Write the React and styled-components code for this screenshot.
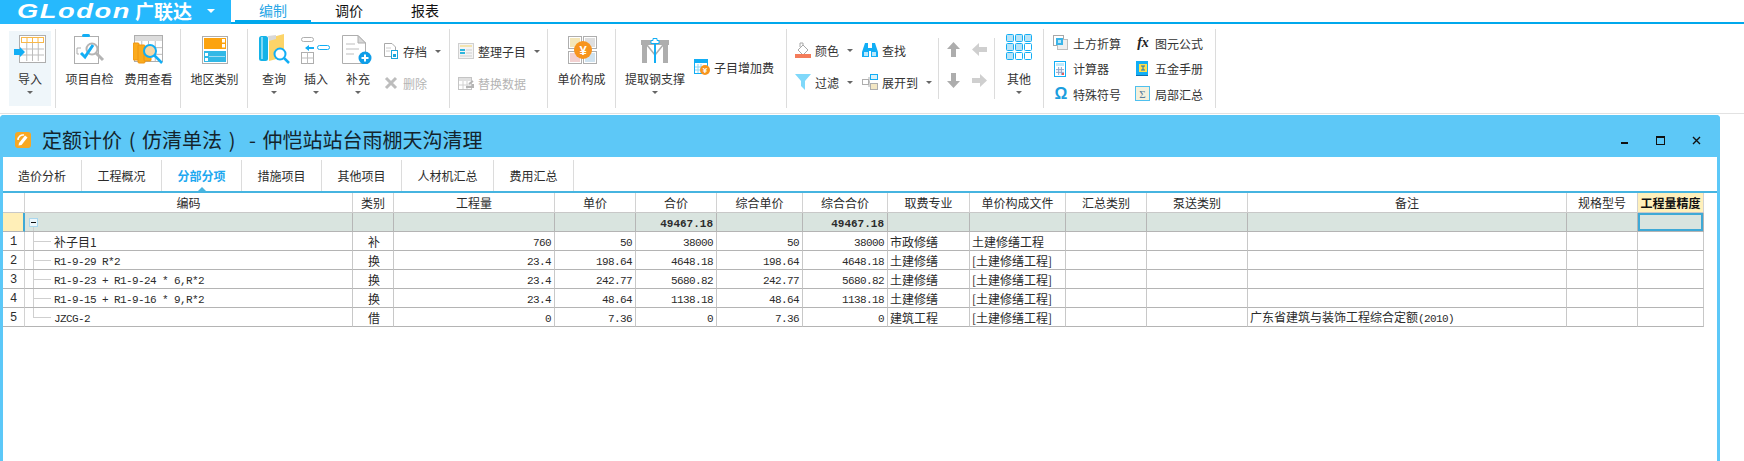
import styled, { createGlobalStyle } from 'styled-components'

const GlobalStyle = createGlobalStyle`
  html, body { margin: 0; padding: 0; background: #fff; }
  body { font-family: "Noto Sans CJK SC", "Liberation Sans", sans-serif; font-size: 12px; color: #2b2b2b; }
`

const Page = styled.div`
  width: 1744px;
  height: 461px;
  overflow: hidden;
  display: flex;
  flex-direction: column;
`

const TopBar = styled.div`
  height: 22px;
  border-bottom: 2px solid #00a8ec;
  display: flex;
`

const Logo = styled.div`
  width: 231px;
  height: 24px;
  background: #26b9fd;
  color: #fff;
  display: flex;
  align-items: flex-start;
  padding-left: 17px;
  box-sizing: border-box;
`

const LogoWord = styled.span`
  font-family: "Liberation Sans", sans-serif;
  font-style: italic;
  font-weight: 700;
  font-size: 21px;
  letter-spacing: 1.2px;
  line-height: 22px;
  width: 118px;
  transform: scaleX(1.3);
  transform-origin: left center;
`

const LogoCn = styled.span`
  font-size: 19px;
  font-weight: 700;
  line-height: 22px;
  width: 72px;
`

const LogoCaret = styled.span`
  width: 0;
  height: 0;
  margin-top: 9px;
  border: 4px solid transparent;
  border-top: 4px solid #fff;
  border-bottom: 0;
`

const MenuTabs = styled.div`
  display: flex;
  margin-left: 4px;
`

const MenuTab = styled.div`
  width: 76px;
  height: 22px;
  box-sizing: border-box;
  text-align: center;
  font-size: 14px;
  line-height: 20px;
  color: ${(p) => (p.$active ? '#2aa6e6' : '#111')};
  background: #fff;
  border-bottom: 2px solid ${(p) => (p.$active ? '#00a8ec' : '#fff')};
`

const Ribbon = styled.div`
  height: 90px;
  box-sizing: border-box;
  border-bottom: 1px solid #e2e2e2;
  display: flex;
  align-items: flex-start;
`

const Group = styled.div`
  width: ${(p) => p.$w}px;
  height: 79px;
  margin-top: 5px;
  box-sizing: border-box;
  border-right: 1px solid #dcdcdc;
  padding-left: ${(p) => p.$pad || 0}px;
  display: flex;
  align-items: flex-start;
  flex: none;
`

const LargeButton = styled.div`
  width: ${(p) => p.$w}px;
  height: ${(p) => (p.$active ? 75 : 79)}px;
  margin-top: ${(p) => (p.$active ? 2 : 0)}px;
  padding-top: ${(p) => (p.$active ? 3 : 5)}px;
  box-sizing: border-box;
  background: ${(p) => (p.$active ? '#eff6fa' : 'transparent')};
  display: flex;
  flex-direction: column;
  align-items: center;
  flex: none;
`

const Label = styled.div`
  line-height: 16px;
  margin-top: ${(p) => p.$top || 7}px;
  white-space: nowrap;
  color: #333;
`

const Caret = styled.span`
  display: block;
  width: 0;
  height: 0;
  flex: none;
  border: 3px solid transparent;
  border-top: 3px solid #666;
  border-bottom: 0;
  margin: ${(p) => p.$m || '4px 0 0'};
`

const Stack = styled.div`
  display: flex;
  flex-direction: column;
  gap: 12px;
  padding-top: 12px;
  margin-left: ${(p) => p.$left || 0}px;
  flex: none;
`

const SmallRow = styled.div`
  display: flex;
  align-items: center;
  height: 20px;
  white-space: nowrap;
  color: ${(p) => (p.$off ? '#b4b4b4' : '#333')};
`

const SoloRow = styled(SmallRow)`
  margin: 28px 0 0 4px;
  flex: none;
`

const SmallIconBox = styled.span`
  width: 16px;
  height: 16px;
  margin-right: 4px;
  display: flex;
  align-items: center;
  justify-content: center;
  flex: none;
`

const ColourGrid = styled.div`
  display: grid;
  grid-template-columns: 67px 76px;
  grid-auto-rows: 20px;
  row-gap: 12px;
  padding-top: 11px;
  margin-left: 8px;
  flex: none;
`

const ShortRule = styled.div`
  width: 1px;
  height: 61px;
  margin-top: 9px;
  background: #dcdcdc;
  flex: none;
`

const ArrowGrid = styled.div`
  width: 55px;
  display: grid;
  grid-template-columns: 15px 15px;
  column-gap: 11px;
  row-gap: 16px;
  padding: 13px 0 0 7px;
  box-sizing: border-box;
  flex: none;
`

const ToolGrid = styled.div`
  display: grid;
  grid-template-columns: 82px 76px;
  grid-auto-rows: 20px;
  row-gap: 5.5px;
  padding-top: 4px;
  margin-left: 9px;
  flex: none;
`

const Window = styled.div`
  margin-top: 1px;
  width: 1720px;
  flex: 1;
  box-sizing: border-box;
  background: #fff;
  border: 3px solid #5cc8f8;
  border-width: 0 3px;
  border-radius: 4px 4px 0 0;
  display: flex;
  flex-direction: column;
`

const TitleBar = styled.div`
  height: 42px;
  margin: 0 -3px;
  padding: 8px 20px 0 15px;
  box-sizing: border-box;
  background: #5dc8f7;
  border-radius: 4px 4px 0 0;
  display: flex;
  align-items: center;
`

const TitleText = styled.div`
  font-size: 20px;
  line-height: 26px;
  margin-left: 11px;
  color: #14242c;
  white-space: pre;
  word-spacing: 2.2px;
  flex: 1;
`

const WinControls = styled.div`
  display: flex;
  align-items: center;
  margin-right: -1px;
`

const WinButton = styled.span`
  width: 9px;
  height: 9px;
  margin-left: ${(p) => p.$ml}px;
  display: block;
  flex: none;
`

const SheetTabs = styled.div`
  height: 36px;
  box-sizing: border-box;
  padding-top: 3px;
  border-bottom: 2px solid #46b4e0;
  display: flex;
`

const SheetTab = styled.div`
  width: ${(p) => p.$w}px;
  box-sizing: border-box;
  position: relative;
  border-right: 1px solid #dcdcdc;
  text-align: center;
  line-height: 31px;
  font-weight: ${(p) => (p.$active ? 700 : 400)};
  color: ${(p) => (p.$active ? '#1ea8f0' : '#2b2b2b')};
  ${(p) =>
    p.$active &&
    `&::after {
      content: '';
      position: absolute;
      left: 36px;
      bottom: 0;
      border: 4px solid transparent;
      border-bottom: 4px solid #46b4e0;
      border-top: 0;
    }`}
`

const Sheet = styled.table`
  width: 1701px;
  table-layout: fixed;
  border-collapse: separate;
  border-spacing: 0;
`

const HeadCell = styled.th`
  height: 20px;
  padding: 0;
  box-sizing: border-box;
  line-height: 16px;
  font-weight: ${(p) => (p.$hot ? 700 : 400)};
  color: ${(p) => (p.$hot ? '#111' : '#2b2b2b')};
  background: ${(p) => (p.$hot ? '#fff0bb' : '#fff')};
  border-right: 1px solid #d2d2d2;
  border-bottom: 1px solid #c8c8c8;
  text-align: center;
  white-space: nowrap;
  overflow: hidden;
`

const Cell = styled.td`
  height: 19px;
  padding: ${(p) => (p.$right ? '2px 3px 0 0' : '2px 0 0 2px')};
  box-sizing: border-box;
  line-height: 14px;
  background: ${(p) => (p.$total ? '#d9e4df' : '#fff')};
  border-right: 1px solid ${(p) => (p.$total ? '#b6b6b6' : '#c8c8c8')};
  border-bottom: 1px solid #b4b4b4;
  text-align: ${(p) => (p.$right ? 'right' : p.$center ? 'center' : 'left')};
  white-space: nowrap;
  overflow: hidden;
  ${(p) => p.$picked && 'box-shadow: inset 0 0 0 2px #3fa9d6;'}
`

const RowNumber = styled.td`
  height: 19px;
  padding: 2px 0 0;
  box-sizing: border-box;
  line-height: 14px;
  text-align: center;
  background: ${(p) => (p.$total ? '#ffefb8' : '#fff')};
  border-right: ${(p) => (p.$total ? '2px solid #3fa9d6' : '1px solid #d2d2d2')};
  border-bottom: 1px solid #b4b4b4;
  font-family: "Liberation Mono", monospace;
`

const TreeCell = styled(Cell)`
  position: relative;
  padding-left: 29px;
  &::before {
    content: '';
    position: absolute;
    left: 8px;
    top: 0;
    width: 1px;
    height: ${(p) => (p.$last ? '10px' : '100%')};
    background: #cfcfcf;
  }
  &::after {
    content: '';
    position: absolute;
    left: 8px;
    top: 9px;
    width: 18px;
    height: 1px;
    background: #cfcfcf;
  }
`

const RootCell = styled(Cell)`
  position: relative;
  padding-top: 0;
  &::after {
    content: '';
    position: absolute;
    left: 8px;
    top: 14px;
    width: 1px;
    height: 5px;
    background: #cfcfcf;
  }
`

const Fold = styled.span`
  display: flex;
  width: 9px;
  height: 9px;
  margin-left: 2px;
  box-sizing: border-box;
  border: 1px solid #a9d7ee;
  background: #eef7fc;
  align-items: center;
  justify-content: center;
  &::before {
    content: '';
    width: 5px;
    height: 1px;
    background: #111;
  }
`

const Mono = styled.span`
  font-family: "Liberation Mono", monospace;
  font-size: 11px;
  letter-spacing: ${(p) => (p.$bold ? 0 : '-0.6px')};
  font-weight: ${(p) => (p.$bold ? 700 : 400)};
`

const SvgBox = styled.svg`
  display: block;
  flex: none;
`

const Svg = ({ w = 32, h = 30, children }) => (
  <SvgBox width={w} height={h} viewBox={`0 0 ${w} ${h}`}>
    {children}
  </SvgBox>
)

const BLUE = '#12aef5'
const GREY = '#aeaeae'

function GridLines({ x, y, w, h, cols, rows, color = '#bdbdbd' }) {
  const lines = []
  for (let i = 1; i < cols; i++) {
    const px = x + (w * i) / cols
    lines.push(<line key={'c' + i} x1={px} x2={px} y1={y} y2={y + h} stroke={color} />)
  }
  for (let i = 1; i < rows; i++) {
    const py = y + (h * i) / rows
    lines.push(<line key={'r' + i} y1={py} y2={py} x1={x} x2={x + w} stroke={color} />)
  }
  return <>{lines}</>
}

const ImportIcon = () => (
  <Svg>
    <rect x="5.5" y="1.5" width="26" height="27" fill="#fff" stroke={GREY} />
    <GridLines x={7} y={9} w={23} h={18} cols={4} rows={3} />
    <rect x="7.5" y="3.5" width="22" height="5" fill="#fff" stroke="#f8b84a" />
    <GridLines x={7.5} y={3.5} w={22} h={5} cols={4} rows={1} color="#f8b84a" />
    <polygon points="0,15 6,15 6,13 11,18 6,23 6,21 0,21" fill={BLUE} />
  </Svg>
)

const CheckIcon = () => (
  <Svg>
    <rect x="0.5" y="2.5" width="24" height="27" fill="#fff" stroke={GREY} />
    <rect x="8" y="0" width="8" height="3" rx="1.5" fill={BLUE} />
    <path d="M3 14h4M3 14v6h2" fill="none" stroke={GREY} />
    <circle cx="18" cy="15" r="5.5" fill="#fff" stroke="#b4b4b4" strokeWidth="2" />
    <line x1="22" y1="19" x2="29" y2="26" stroke="#b4b4b4" strokeWidth="3" />
    <polyline points="7,19 11,23 19,11" fill="none" stroke={BLUE} strokeWidth="3" />
  </Svg>
)

const CostIcon = () => (
  <Svg>
    <rect x="1.5" y="1.5" width="28" height="26" fill="#fff" stroke={GREY} />
    <rect x="2" y="2" width="27" height="5" fill="#dcdcdc" />
    <GridLines x={2} y={7} w={27} h={20} cols={4} rows={3} />
    <rect x="0" y="9" width="6" height="17" rx="1" fill="#fbab1d" stroke="#ee9510" />
    <rect x="5" y="11" width="7" height="18" rx="1" fill="#fbab1d" stroke="#ee9510" />
    <rect x="11" y="13" width="7" height="14" rx="1" fill="#fbab1d" stroke="#ee9510" />
    <circle cx="17" cy="17" r="6" fill="#f6d8a8" stroke={BLUE} strokeWidth="2" />
    <line x1="21" y1="21" x2="29" y2="29" stroke={BLUE} strokeWidth="2.5" />
  </Svg>
)

const AreaIcon = () => (
  <Svg>
    <rect x="3.5" y="2.5" width="25" height="27" fill="#fff" stroke={GREY} />
    <rect x="5" y="4" width="22" height="11" fill="#fca30f" />
    <rect x="23" y="5" width="3" height="3.5" fill="#fff" />
    <rect x="23" y="10" width="3" height="3.5" fill="#fff" />
    <rect x="5" y="17" width="22" height="11" fill="#31b8e6" />
    <rect x="6" y="19" width="3" height="3" fill="#fff" />
    <rect x="6" y="24" width="3" height="3" fill="#fff" />
    <line x1="10" x2="26" y1="22.5" y2="22.5" stroke="#9fdcf2" />
  </Svg>
)

const BookIcon = () => (
  <Svg>
    <path d="M11 4 L26 0 V23 L11 27 Z" fill="#fcd468" />
    <path d="M10 2 L18 1 V5 L11 7 Z" fill="#d8d8d8" />
    <rect x="1" y="2" width="9" height="25" rx="2.5" fill="#14b3e8" />
    <rect x="3" y="3" width="2" height="22" fill="#7fd8f4" />
    <circle cx="22" cy="20" r="5.5" fill="#fff" stroke={BLUE} strokeWidth="2" />
    <line x1="26" y1="24" x2="31" y2="29" stroke={BLUE} strokeWidth="2.5" />
  </Svg>
)

const InsertIcon = () => (
  <Svg>
    <rect x="1.5" y="3.5" width="12" height="4" rx="2" fill="#fff" stroke={GREY} />
    <polygon points="5,14 9,11 9,13 14,13 14,15 9,15 9,17" fill={BLUE} />
    <rect x="17.5" y="11.5" width="12" height="4" rx="2" fill="#fff" stroke={BLUE} />
    <rect x="1.5" y="18.5" width="12" height="11" fill="#fff" stroke={GREY} />
    <GridLines x={1.5} y={18.5} w={12} h={11} cols={2} rows={2} />
  </Svg>
)

const SupplementIcon = () => (
  <Svg>
    <path d="M0.5 1.5 H16 L23.5 9 V29.5 H0.5 Z" fill="#fff" stroke={GREY} />
    <path d="M16 1.5 V9 H23.5 Z" fill="#d8d8d8" stroke={GREY} />
    <path d="M4 10h9M4 15h13M4 20h8" stroke="#d4d4d4" strokeWidth="1.5" />
    <circle cx="23" cy="24" r="6.5" fill="#0f9ee8" />
    <path d="M23 20.5v7M19.5 24h7" stroke="#fff" strokeWidth="2" />
  </Svg>
)

const RateIcon = () => (
  <Svg>
    {[
      [2, 2, '#f4e6b8'],
      [17, 2, '#dedede'],
      [2, 17, '#f2d0d0'],
      [17, 17, '#cfe2ef'],
    ].map(([x, y, c]) => (
      <g key={x + '-' + y}>
        <rect x={x + 0.5} y={y + 0.5} width="13" height="12" fill="#fff" stroke={GREY} />
        <rect x={x + 2} y={y + 2} width="10" height="9" fill={c} />
      </g>
    ))}
    <circle cx="17" cy="16" r="9" fill="#f7941d" />
    <text x="17" y="21" textAnchor="middle" fontSize="13" fontWeight="700" fill="#fff" fontFamily="Liberation Sans">¥</text>
  </Svg>
)

const BraceIcon = () => (
  <Svg>
    <rect x="2" y="6" width="28" height="5" fill="#aeaeae" />
    <rect x="3" y="6" width="5" height="23" fill="#aeaeae" />
    <rect x="24" y="6" width="5" height="23" fill="#aeaeae" />
    <path d="M8 11 L16 21 L24 11" fill="none" stroke="#aeaeae" strokeWidth="1.5" />
    <rect x="15" y="4" width="2" height="25" fill={BLUE} />
    <path d="M12 9.5h8v-3h-2v-2h-4v2h-2z" fill="#fff" stroke={BLUE} />
  </Svg>
)

const OtherIcon = () => (
  <Svg w={26} h={26}>
    {[0, 1, 2].flatMap((r) =>
      [0, 1, 2].map((c) => (
        <rect
          key={r + '-' + c}
          x={0.5 + c * 9}
          y={0.5 + r * 9}
          width="7"
          height="7"
          rx="1"
          fill={c + r < 3 && !(r === 1 && c === 2) ? '#b9e3f6' : '#fff'}
          stroke={BLUE}
        />
      ))
    )}
  </Svg>
)

const ArchiveIcon = () => (
  <Svg w={16} h={16}>
    <path d="M1.5 0.5 H9 L12.5 4 V13.5 H1.5 Z" fill="#fff" stroke="#a9a9a9" />
    <path d="M3 5h5M3 8h4" stroke="#ccc" />
    <rect x="8.5" y="7.5" width="6" height="8" fill="#fff" stroke="#1ba6dc" />
    <rect x="10" y="11" width="3" height="3" fill="#1ba6dc" />
  </Svg>
)

const DeleteIcon = () => (
  <Svg w={16} h={16}>
    <path d="M3 3 L13 13 M13 3 L3 13" stroke="#bdbdbd" strokeWidth="3" />
  </Svg>
)

const SortIcon = () => (
  <Svg w={16} h={16}>
    <rect x="0.5" y="0.5" width="15" height="15" fill="#f4f4f4" stroke="#cfcfcf" />
    <rect x="2" y="2" width="12" height="2" fill="#f3e3b0" />
    <rect x="2" y="6" width="5" height="2" fill="#2fb5dc" />
    <rect x="2" y="9" width="5" height="2" fill="#2fb5dc" />
    <path d="M8 7h6M8 10h6M2 13h12" stroke="#cfcfcf" />
  </Svg>
)

const ReplaceIcon = () => (
  <Svg w={16} h={16}>
    <rect x="0.5" y="2.5" width="13" height="12" fill="#fff" stroke="#c4c4c4" />
    <rect x="1" y="3" width="12" height="3" fill="#e0e0e0" />
    <GridLines x={1} y={6} w={12} h={8} cols={3} rows={2} color="#d0d0d0" />
    <path d="M8 12 L15 12 L15 9 M11 9 L15 6" stroke="#b4b4b4" strokeWidth="2" fill="none" />
  </Svg>
)

const SubFeeIcon = () => (
  <Svg w={16} h={16}>
    <rect x="0.5" y="0.5" width="13" height="14" fill="#fff" stroke={BLUE} />
    <rect x="1" y="1" width="12" height="3" fill={BLUE} />
    <GridLines x={1} y={5} w={9} h={9} cols={3} rows={3} color="#8cd5f5" />
    <circle cx="11" cy="11" r="5" fill="#f7941d" />
    <text x="11" y="14" textAnchor="middle" fontSize="8" fontWeight="700" fill="#fff" fontFamily="Liberation Sans">¥</text>
  </Svg>
)

const PaintIcon = () => (
  <Svg w={16} h={16}>
    <path d="M3 8 L8 3 L13 8 L8 13 Z" fill="#fff" stroke="#a8a8a8" />
    <path d="M5 5 V1 H8 V4" fill="none" stroke="#a8a8a8" />
    <rect x="0" y="12" width="16" height="4" fill="#f47c5a" />
  </Svg>
)

const BinocularsIcon = () => (
  <Svg w={16} h={16}>
    <path d="M3 1h3v5h4V1h3l3 9v5H9V9H7v6H0v-5z" fill={BLUE} />
    <rect x="2" y="10" width="4" height="4" fill="#bde8fb" />
    <rect x="10" y="10" width="4" height="4" fill="#bde8fb" />
  </Svg>
)

const FunnelIcon = () => (
  <Svg w={16} h={16}>
    <polygon points="0,0 16,0 10,7 10,16 6,12 6,7" fill="#7fd8fa" />
  </Svg>
)

const ExpandIcon = () => (
  <Svg w={16} h={16}>
    <rect x="0.5" y="5.5" width="6" height="5" fill="#fff" stroke={GREY} />
    <rect x="8.5" y="0.5" width="7" height="5" fill="#d9f1fb" stroke={BLUE} />
    <rect x="8.5" y="9.5" width="7" height="6" fill="#f3e7c4" stroke={GREY} />
    <path d="M7 8h1M7 3v10" stroke={GREY} />
  </Svg>
)

const Arrow = ({ dir, light }) => {
  const rot = { up: 0, right: 90, down: 180, left: 270 }[dir]
  return (
    <Svg w={15} h={15}>
      <polygon
        points="7.5,0 14,7 10,7 10,15 5,15 5,7 1,7"
        fill={light ? '#cfcfcf' : '#adadad'}
        transform={`rotate(${rot} 7.5 7.5)`}
      />
    </Svg>
  )
}

const EarthIcon = () => (
  <Svg w={16} h={16}>
    <rect x="0.5" y="0.5" width="10" height="10" fill="#fff" stroke="#a8a8a8" />
    <rect x="4.5" y="4.5" width="10" height="10" fill="#eee" stroke="#bdbdbd" />
    <rect x="3" y="3" width="7" height="7" fill="#3ab4e8" />
    <rect x="5" y="5" width="3" height="3" fill="#b9e6f8" />
  </Svg>
)

const CalcIcon = () => (
  <Svg w={16} h={16}>
    <rect x="1.5" y="0.5" width="11" height="15" fill="#fff" stroke={BLUE} />
    <rect x="3" y="2" width="8" height="3" fill="#bfe9fb" />
    <GridLines x={3} y={6} w={8} h={8} cols={3} rows={3} color="#8fa4c9" />
    <rect x="9" y="12" width="2" height="2" fill="#e35d5d" />
  </Svg>
)

const ManualIcon = () => (
  <Svg w={16} h={16}>
    <rect x="1" y="0" width="12" height="14" fill={BLUE} />
    <rect x="4" y="3" width="8" height="8" fill="#ffe14d" />
    <path d="M6 5h4M8 5v4M6 9h4" stroke="#1a73b8" />
    <rect x="1" y="14" width="12" height="1" fill="#0c6fb0" />
  </Svg>
)

const SumIcon = () => (
  <Svg w={16} h={16}>
    <rect x="0.5" y="0.5" width="14" height="14" fill="#f3f0dc" stroke="#4fc0ee" />
    <text x="7.5" y="12" textAnchor="middle" fontSize="11" fill="#5b7f9a" fontFamily="Liberation Serif">Σ</text>
  </Svg>
)

const FxMark = styled.span`
  font-family: "Liberation Serif", serif;
  font-style: italic;
  font-weight: 700;
  font-size: 14px;
  color: #222;
`

const OmegaMark = styled.span`
  font-family: "Liberation Sans", sans-serif;
  font-weight: 700;
  font-size: 16px;
  color: #1b9ede;
`

const AppBadge = () => (
  <Svg w={16} h={16}>
    <rect x="0" y="0" width="16" height="16" rx="3" fill="#f7a823" />
    <path d="M4 11 L10 3.5 L12.5 5.5 L6.5 13 L3.5 13.5 Z" fill="#fff" />
    <path d="M3 8 a5 5 0 0 1 6 -5" fill="none" stroke="#fff" strokeWidth="1.5" />
  </Svg>
)

const columns = [
  ['', 22], ['编码', 328], ['类别', 41], ['工程量', 161], ['单价', 81], ['合价', 81],
  ['综合单价', 86], ['综合合价', 85], ['取费专业', 82], ['单价构成文件', 96], ['汇总类别', 81],
  ['泵送类别', 101], ['备注', 319], ['规格型号', 71], ['工程量精度', 66],
]

const rows = [
  { code: <>补子目1</>, type: '补', qty: '760', price: '50', total: '38000', major: '市政修缮', file: '土建修缮工程' },
  { code: 'R1-9-29 R*2', mono: true, type: '换', qty: '23.4', price: '198.64', total: '4648.18', major: '土建修缮', file: '[土建修缮工程]' },
  { code: 'R1-9-23 + R1-9-24 * 6,R*2', mono: true, type: '换', qty: '23.4', price: '242.77', total: '5680.82', major: '土建修缮', file: '[土建修缮工程]' },
  { code: 'R1-9-15 + R1-9-16 * 9,R*2', mono: true, type: '换', qty: '23.4', price: '48.64', total: '1138.18', major: '土建修缮', file: '[土建修缮工程]' },
  { code: 'JZCG-2', mono: true, type: '借', qty: '0', price: '7.36', total: '0', major: '建筑工程', file: '[土建修缮工程]', note: true },
]

const sheetTabs = [
  ['造价分析', 79], ['工程概况', 80], ['分部分项', 80, true], ['措施项目', 80],
  ['其他项目', 80], ['人材机汇总', 92], ['费用汇总', 80],
]

function Small({ icon, text, caret, off }) {
  return (
    <SmallRow $off={off}>
      <SmallIconBox>{icon}</SmallIconBox>
      {text}
      {caret && <Caret $m="0 0 0 8px" />}
    </SmallRow>
  )
}

function Large({ w, icon, text, caret, active }) {
  return (
    <LargeButton $w={w} $active={active}>
      {icon}
      <Label>{text}</Label>
      {caret && <Caret />}
    </LargeButton>
  )
}

export default function App() {
  return (
    <Page>
      <GlobalStyle />
      <TopBar>
        <Logo>
          <LogoWord>GLodon</LogoWord>
          <LogoCn>广联达</LogoCn>
          <LogoCaret />
        </Logo>
        <MenuTabs>
          <MenuTab $active>编制</MenuTab>
          <MenuTab>调价</MenuTab>
          <MenuTab>报表</MenuTab>
        </MenuTabs>
      </TopBar>

      <Ribbon>
        <Group $w={56} $pad={9}>
          <Large w={42} icon={<ImportIcon />} text="导入" caret active />
        </Group>
        <Group $w={125} $pad={4}>
          <Large w={59} icon={<CheckIcon />} text="项目自检" />
          <Large w={59} icon={<CostIcon />} text="费用查看" />
        </Group>
        <Group $w={67}>
          <Large w={67} icon={<AreaIcon />} text="地区类别" />
        </Group>
        <Group $w={202} $pad={5}>
          <Large w={42} icon={<BookIcon />} text="查询" caret />
          <Large w={42} icon={<InsertIcon />} text="插入" caret />
          <Large w={42} icon={<SupplementIcon />} text="补充" caret />
          <Stack $left={4}>
            <Small icon={<ArchiveIcon />} text="存档" caret />
            <Small icon={<DeleteIcon />} text="删除" off />
          </Stack>
        </Group>
        <Group $w={98} $pad={8}>
          <Stack>
            <Small icon={<SortIcon />} text="整理子目" caret />
            <Small icon={<ReplaceIcon />} text="替换数据" off />
          </Stack>
        </Group>
        <Group $w={68}>
          <Large w={67} icon={<RateIcon />} text="单价构成" />
        </Group>
        <Group $w={171} $pad={4}>
          <Large w={70} icon={<BraceIcon />} text="提取钢支撑" caret />
          <SoloRow>
            <SmallIconBox>
              <SubFeeIcon />
            </SmallIconBox>
            子目增加费
          </SoloRow>
        </Group>
        <Group $w={257}>
          <ColourGrid>
            <Small icon={<PaintIcon />} text="颜色" caret />
            <Small icon={<BinocularsIcon />} text="查找" />
            <Small icon={<FunnelIcon />} text="过滤" caret />
            <Small icon={<ExpandIcon />} text="展开到" caret />
          </ColourGrid>
          <ShortRule />
          <ArrowGrid>
            <Arrow dir="up" />
            <Arrow dir="left" light />
            <Arrow dir="down" />
            <Arrow dir="right" light />
          </ArrowGrid>
          <ShortRule />
          <LargeButton $w={48}>
            <OtherIcon />
            <Label $top={11}>其他</Label>
            <Caret />
          </LargeButton>
        </Group>
        <Group $w={172}>
          <ToolGrid>
            <Small icon={<EarthIcon />} text="土方折算" />
            <Small icon={<FxMark>fx</FxMark>} text="图元公式" />
            <Small icon={<CalcIcon />} text="计算器" />
            <Small icon={<ManualIcon />} text="五金手册" />
            <Small icon={<OmegaMark>Ω</OmegaMark>} text="特殊符号" />
            <Small icon={<SumIcon />} text="局部汇总" />
          </ToolGrid>
        </Group>
      </Ribbon>

      <Window>
        <TitleBar>
          <AppBadge />
          <TitleText>定额计价 ( 仿清单法 )  - 仲恺站站台雨棚天沟清理</TitleText>
          <WinControls>
            <WinButton $ml={0}>
              <Svg w={9} h={9}>
                <rect x="1" y="6" width="7" height="2" fill="#111" />
              </Svg>
            </WinButton>
            <WinButton $ml={27}>
              <Svg w={9} h={9}>
                <rect x="0.5" y="0.5" width="8" height="8" fill="none" stroke="#111" />
                <rect x="0" y="0" width="9" height="2" fill="#111" />
              </Svg>
            </WinButton>
            <WinButton $ml={27}>
              <Svg w={9} h={9}>
                <path d="M1 1 L8 8 M8 1 L1 8" stroke="#111" strokeWidth="1.4" />
              </Svg>
            </WinButton>
          </WinControls>
        </TitleBar>

        <SheetTabs>
          {sheetTabs.map(([name, w, active]) => (
            <SheetTab key={name} $w={w} $active={active}>
              {name}
            </SheetTab>
          ))}
        </SheetTabs>

        <Sheet>
          <colgroup>
            {columns.map(([name, w], i) => (
              <col key={i} width={w} />
            ))}
          </colgroup>
          <thead>
            <tr>
              {columns.map(([name], i) => (
                <HeadCell key={i} $hot={i === columns.length - 1}>
                  {name}
                </HeadCell>
              ))}
            </tr>
          </thead>
          <tbody>
            <tr>
              <RowNumber $total />
              <RootCell $total>
                <Fold />
              </RootCell>
              <Cell $total />
              <Cell $total />
              <Cell $total />
              <Cell $total $right>
                <Mono $bold>49467.18</Mono>
              </Cell>
              <Cell $total />
              <Cell $total $right>
                <Mono $bold>49467.18</Mono>
              </Cell>
              <Cell $total />
              <Cell $total />
              <Cell $total />
              <Cell $total />
              <Cell $total />
              <Cell $total />
              <Cell $total $picked />
            </tr>
            {rows.map((r, i) => (
              <tr key={i}>
                <RowNumber>{i + 1}</RowNumber>
                <TreeCell $last={i === rows.length - 1}>
                  {r.mono ? <Mono>{r.code}</Mono> : r.code}
                </TreeCell>
                <Cell $center>{r.type}</Cell>
                <Cell $right><Mono>{r.qty}</Mono></Cell>
                <Cell $right><Mono>{r.price}</Mono></Cell>
                <Cell $right><Mono>{r.total}</Mono></Cell>
                <Cell $right><Mono>{r.price}</Mono></Cell>
                <Cell $right><Mono>{r.total}</Mono></Cell>
                <Cell>{r.major}</Cell>
                <Cell>{r.file}</Cell>
                <Cell />
                <Cell />
                <Cell>
                  {r.note && (
                    <>
                      广东省建筑与装饰工程综合定额<Mono>(2010)</Mono>
                    </>
                  )}
                </Cell>
                <Cell />
                <Cell />
              </tr>
            ))}
          </tbody>
        </Sheet>
      </Window>
    </Page>
  )
}
